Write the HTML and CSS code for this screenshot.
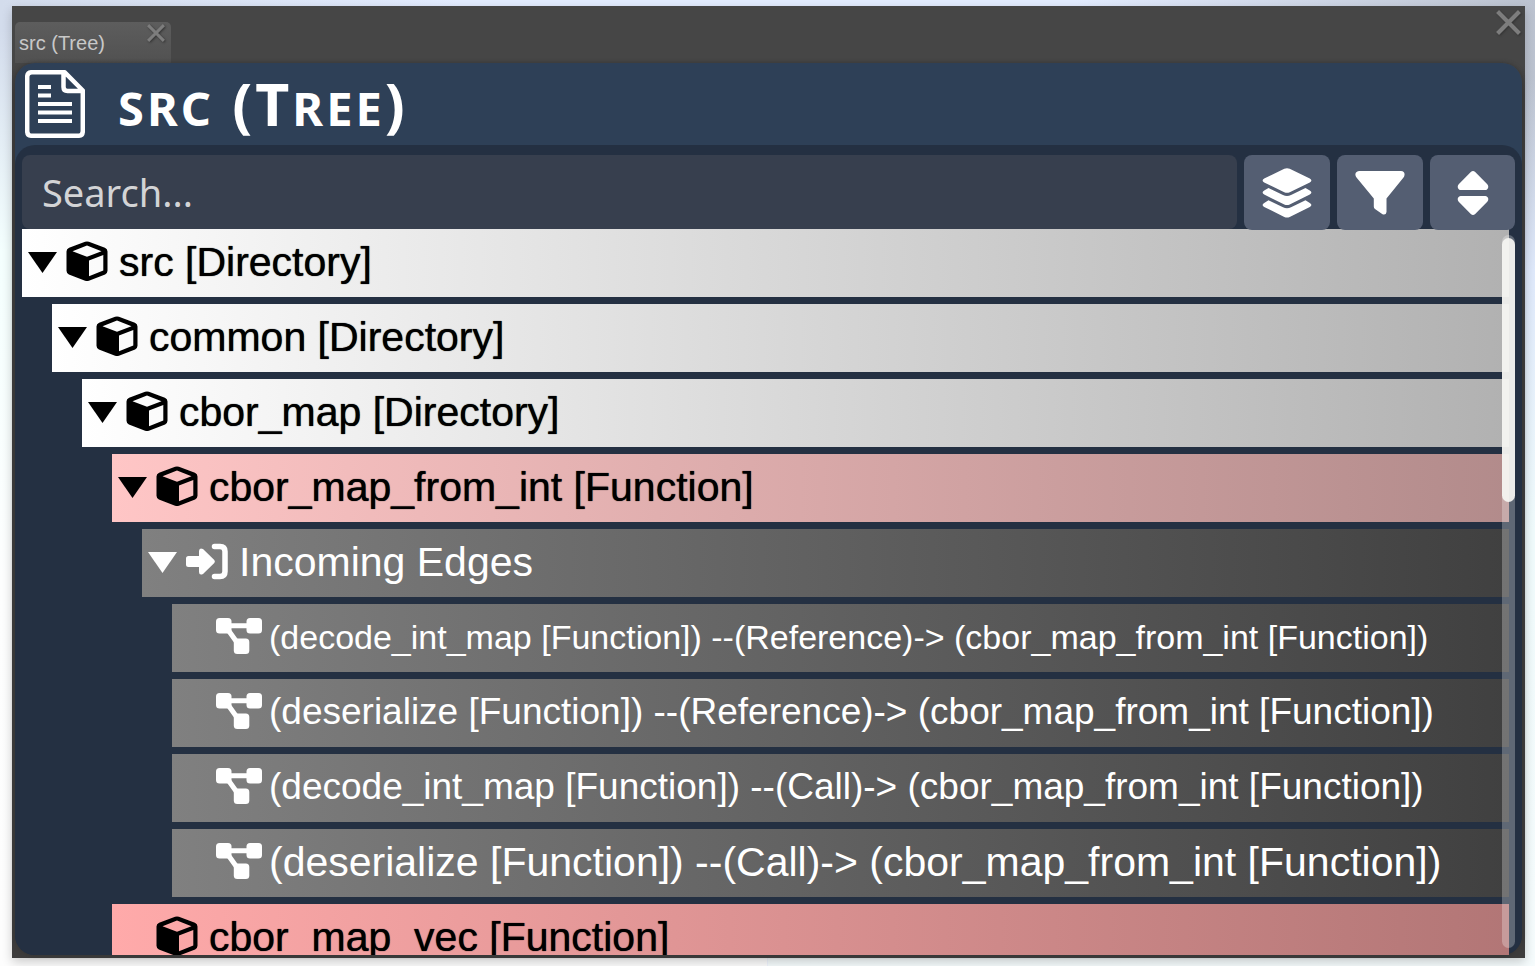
FILE: index.html
```html
<!DOCTYPE html>
<html lang="en">
<head>
<meta charset="utf-8">
<title>src (Tree)</title>
<link rel="stylesheet" href="styles.css">
</head>
<body>
<svg class="sprite" aria-hidden="true">
  <symbol id="cube" viewBox="0 0 41 41">
    <path fill="currentColor" fill-rule="evenodd" d="M18.600.800Q20.500 0 22.400.800L38.400 6.800Q41 8 41 10.600V29.800Q41 32.400 38.600 33.400L22.400 39.700Q20.500 40.500 18.600 39.700L2.400 33.400Q0 32.400 0 29.800V10.600Q0 8 2.600 6.800ZM20.500 4.600L6 10.300L20.500 15.800L35 10.300ZM22.500 19.400V35.200L36.800 29.600V14Z"/>
  </symbol>
  <symbol id="incoming" viewBox="0 0 42 36">
    <path fill="currentColor" d="M2.500 12.500H13V7.500Q13.200 3.800 17 5.500L28.300 16.500Q29.500 18 28.300 19.500L17 30.500Q13.200 32.200 13 28.500V23.500H2.500Q0 23.500 0 21V15Q0 12.500 2.500 12.500Z"/>
    <path fill="none" stroke="currentColor" stroke-width="5.500" stroke-linecap="round" d="M28.500 3H34Q39 3 39 8V28Q39 33 34 33H28.500"/>
  </symbol>
  <symbol id="edge" viewBox="0 0 46 36">
    <path fill="none" stroke="currentColor" stroke-width="5" d="M8 7.800H38M10 9L25 30"/>
    <rect fill="currentColor" width="15.500" height="15.500" rx="3.500"/>
    <rect fill="currentColor" x="30.500" width="15.500" height="15.500" rx="3.500"/>
    <rect fill="currentColor" x="17.800" y="20.500" width="15.500" height="15.500" rx="3.500"/>
  </symbol>
  <symbol id="triangle" viewBox="0 0 29 21"><path fill="currentColor" d="M0 0H29L14.500 21Z"/></symbol>
  <symbol id="cross" viewBox="0 0 24 24"><path fill="none" stroke="currentColor" stroke-width="4" d="M1.500 1.500L22.500 22.500M22.500 1.500L1.500 22.500"/></symbol>
</svg>

<main class="window">
  <div class="tabbar">
    <div class="tab">
      <span class="tab-label">src (Tree)</span>
      <button class="close close-tab" aria-label="Close tab"><svg><use href="#cross"/></svg></button>
    </div>
    <button class="close close-window" aria-label="Close window"><svg><use href="#cross"/></svg></button>
  </div>

  <section class="panel">
    <header class="header">
      <svg class="doc" viewBox="0 0 60 68" aria-hidden="true">
        <path fill="none" stroke="#fff" stroke-width="4.500" stroke-linejoin="round" d="M39.500 2.200H7Q2.200 2.200 2.200 7V61Q2.200 65.800 7 65.800H53Q57.800 65.800 57.800 61V20.500ZM38.500 3V17Q38.500 21 42.500 21H57"/>
        <path stroke="#fff" stroke-width="4" d="M13 17H26M13 25.500H26M13 34H47M13 42.500H47M13 51H47"/>
      </svg>
      <h1 class="title"><span class="small">src</span> (T<span class="small">ree</span>)</h1>
    </header>

    <div class="body">
      <div class="toolbar">
        <input class="search" type="text" placeholder="Search..." aria-label="Search">
        <button class="tool" aria-label="Group"><svg width="50" height="50" viewBox="0 0 50 50"><path fill="#fff" d="M22.300.800Q25-.400 27.700.800L47.800 10.500Q51 12.500 47.800 14.500L27.700 24.200Q25 25.400 22.300 24.200L2.200 14.500Q-1 12.500 2.200 10.500ZM6.500 20L21 27Q25 28.900 29 27L43.500 20L47.800 22.500Q51 24.500 47.800 26.500L27.700 36.500Q25 37.700 22.300 36.500L2.200 26.500Q-1 24.500 2.200 22.500ZM6.500 32.300L21 39.300Q25 41.200 29 39.300L43.500 32.300L47.800 35Q51 37 47.800 39L27.700 48.900Q25 50.100 22.300 48.900L2.200 39Q-1 37 2.200 35Z"/></svg></button>
        <button class="tool" aria-label="Filter"><svg width="50" height="44" viewBox="0 0 50 44"><path fill="#fff" d="M4 0H46Q50 .500 49.500 4Q49.300 5.500 48.500 6.500L31.500 27.500V41Q31 44.500 27.500 43.300L20 38Q18.800 37 18.800 35.500V27.500L1.500 6.500Q-.500 3.500 1 1.500Q2.200 0 4 0Z"/></svg></button>
        <button class="tool" aria-label="Sort"><svg width="32" height="44" viewBox="0 0 32 44"><path fill="#fff" d="M13.800 1Q16 -.800 18.200 1L30.300 13.200Q32 15.500 30.800 17.500Q30 19 28.500 19H3.500Q2 19 1.200 17.500Q0 15.500 1.700 13.200ZM3.500 25H28.500Q30 25 30.800 26.500Q32 28.500 30.300 30.800L18.200 43Q16 44.800 13.800 43L1.700 30.800Q0 28.500 1.200 26.500Q2 25 3.500 25Z"/></svg></button>
      </div>

      <div class="viewport">
        <ul class="tree">
          <li>
            <div class="row directory"><button class="toggle" aria-label="Collapse"><svg><use href="#triangle"/></svg></button><svg class="icon"><use href="#cube"/></svg><span>src [Directory]</span></div>
            <ul>
              <li>
                <div class="row directory"><button class="toggle" aria-label="Collapse"><svg><use href="#triangle"/></svg></button><svg class="icon"><use href="#cube"/></svg><span>common [Directory]</span></div>
                <ul>
                  <li>
                    <div class="row directory"><button class="toggle" aria-label="Collapse"><svg><use href="#triangle"/></svg></button><svg class="icon"><use href="#cube"/></svg><span>cbor_map [Directory]</span></div>
                    <ul>
                      <li>
                        <div class="row function"><button class="toggle" aria-label="Collapse"><svg><use href="#triangle"/></svg></button><svg class="icon"><use href="#cube"/></svg><span>cbor_map_from_int [Function]</span></div>
                        <ul>
                          <li>
                            <div class="row edges"><button class="toggle" aria-label="Collapse"><svg><use href="#triangle"/></svg></button><svg class="icon"><use href="#incoming"/></svg><span>Incoming Edges</span></div>
                            <ul>
                              <li><div class="row edges leaf"><svg class="icon wide"><use href="#edge"/></svg><span class="size-s">(decode_int_map [Function]) --(Reference)-&gt; (cbor_map_from_int [Function])</span></div></li>
                              <li><div class="row edges leaf"><svg class="icon wide"><use href="#edge"/></svg><span class="size-m">(deserialize [Function]) --(Reference)-&gt; (cbor_map_from_int [Function])</span></div></li>
                              <li><div class="row edges leaf"><svg class="icon wide"><use href="#edge"/></svg><span class="size-m">(decode_int_map [Function]) --(Call)-&gt; (cbor_map_from_int [Function])</span></div></li>
                              <li><div class="row edges leaf"><svg class="icon wide"><use href="#edge"/></svg><span>(deserialize [Function]) --(Call)-&gt; (cbor_map_from_int [Function])</span></div></li>
                            </ul>
                          </li>
                        </ul>
                      </li>
                      <li>
                        <div class="row function deep leaf"><svg class="icon"><use href="#cube"/></svg><span>cbor_map_vec [Function]</span></div>
                      </li>
                    </ul>
                  </li>
                </ul>
              </li>
            </ul>
          </li>
        </ul>
        <div class="scrollbar"><div class="thumb"></div></div>
      </div>
    </div>
  </section>
</main>
</body>
</html>
```
FILE: styles.css
```css
* { box-sizing: border-box; }

body {
  margin: 0;
  height: 100vh;
  padding: 6px 10px 8px 12px;
  display: flex;
  overflow: hidden;
  font-family: "Liberation Sans", Arial, sans-serif;
  background:
    linear-gradient(to bottom, transparent 3%, #f4fffe 26%, #fdfefe 60%, #fdfdfd) left / 50% 100% no-repeat,
    linear-gradient(to bottom, transparent 8%, #dfe9fb 28%, #f0fbfc 55%, #f6fcfd) right / 50% 100% no-repeat,
    linear-gradient(to right, #d3dcec, #e3ecff 30%, #e3ecff 70%, #bcc3d0);
}

button { border: 0; padding: 0; background: none; color: inherit; }
svg { display: block; }
.sprite { position: absolute; width: 0; height: 0; }

.window {
  flex: 1;
  min-width: 0;
  display: flex;
  flex-direction: column;
  padding: 0 3px 3px;
  background: linear-gradient(#464646 60px, #3d3c3c 90px);
  box-shadow: 0 4px 10px rgba(0, 0, 0, 0.2);
}

.tabbar {
  height: 57px;
  display: flex;
  justify-content: space-between;
  align-items: flex-end;
  flex: none;
}

.tab {
  width: 156px;
  height: 41px;
  padding: 2px 6px 0 4px;
  display: flex;
  justify-content: space-between;
  border-radius: 5px 5px 0 0;
  background: linear-gradient(#5d5d5d, #515151);
  color: #c8c8c8;
}

.tab-label { font-size: 20px; line-height: 39px; }

.close { color: #7d7d7d; filter: drop-shadow(1px 1px 1px #333); }
.close-tab svg { width: 18px; height: 18px; }
.close-tab { align-self: flex-start; }
.close-window { align-self: flex-start; margin: 4px 1px 0 0; }
.close-window svg { width: 25px; height: 25px; }

.panel {
  flex: 1;
  min-height: 0;
  display: flex;
  flex-direction: column;
  border-radius: 20px;
  background: linear-gradient(#2e4057 120px, #243042 120px);
  box-shadow: 0 0 4px #333;
}

.header {
  height: 82px;
  flex: none;
  display: flex;
  align-items: flex-start;
  gap: 33px;
  padding: 7px 10px;
}

.doc { width: 60px; height: 68px; }

.title {
  margin: 0;
  font: bold 59px/66px "Noto Sans", "Open Sans", sans-serif;
  letter-spacing: 3px;
  color: #fff;
  white-space: nowrap;
}

.small { font-size: 47px; text-transform: uppercase; }

.body {
  flex: 1;
  min-height: 0;
  display: flex;
  flex-direction: column;
  padding: 10px 7px 0;
  border-radius: 20px;
  background: #243042;
}

.toolbar { display: flex; gap: 7px; height: 74px; flex: none; }

.search {
  flex: 1;
  min-width: 0;
  padding: 0 20px;
  border: 0;
  border-radius: 8px;
  background: #373f4e;
  color: #fff;
  font: 38px "Noto Sans", "Open Sans", sans-serif;
}

.search::placeholder { color: #d3d4d6; opacity: 1; }

.tool {
  width: 86px;
  height: 75px;
  display: flex;
  align-items: center;
  justify-content: center;
  border-radius: 8px;
  background: #545e72;
  z-index: 1;
}

.tool:last-child { width: 85px; }

.viewport { flex: 1; min-height: 0; position: relative; overflow: hidden auto; scrollbar-width: none; }

.tree, .tree ul { margin: 0; padding: 0; list-style: none; }
.tree { padding-right: 6px; }
.tree ul { padding-left: 30px; }

.row {
  height: 68px;
  margin-bottom: 7px;
  padding-left: 6px;
  display: flex;
  align-items: center;
  font-size: 41px;
  line-height: 48px;
  white-space: nowrap;
}

.row span { padding-bottom: 2px; }
.toggle { width: 29px; margin-right: 9px; margin-bottom: 2px; }
.toggle svg { width: 29px; height: 21px; }
.icon { width: 42px; height: 41px; margin-right: 11px; margin-bottom: 4px; flex: none; }
.icon.wide { width: 46px; height: 36px; margin-right: 7px; }
.leaf { padding-left: 44px; }

.directory { color: #000; background: linear-gradient(to right, #fff, #b1b1b1); }
.function { color: #000; background: linear-gradient(to right, #ffc6c6, #b28b8b); }
.function.deep { background: linear-gradient(to right, #ffaaaa, #b27676); }
.edges { color: #fff; background: linear-gradient(to right, #808080, #404040); }
.directory span, .function span { text-shadow: 0 0 1px #000; }

.row .size-s { font-size: 34px; }
.row .size-m { font-size: 37px; }

.scrollbar {
  position: absolute;
  top: 6px;
  right: 0;
  bottom: 7px;
  width: 13px;
  border-radius: 7px;
  background: rgba(255, 255, 255, 0.27);
}

.thumb {
  height: 37%;
  margin-top: 3px;
  border-radius: 7px;
  background: rgba(245, 245, 242, 0.93);
}
```
